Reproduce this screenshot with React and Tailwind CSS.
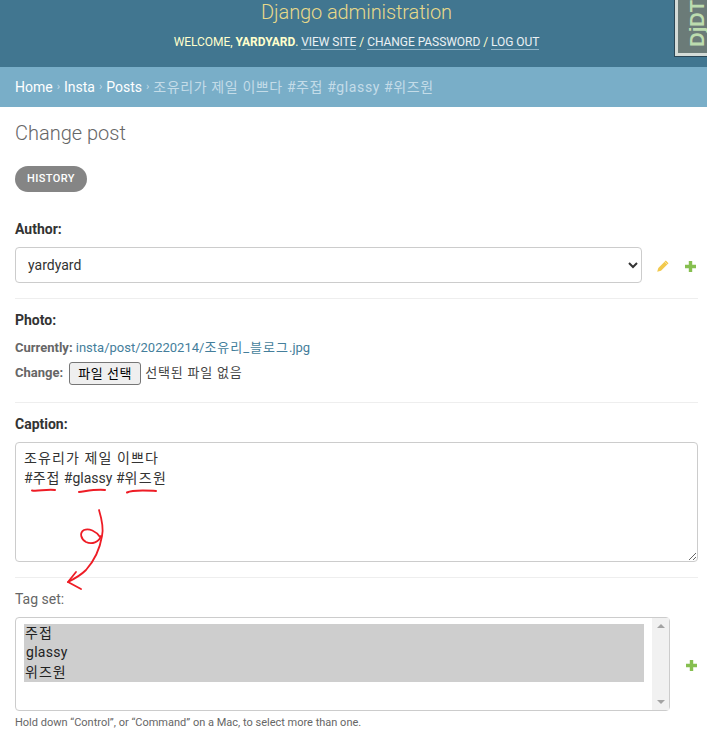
const font = { fontFamily: '"Roboto", "Noto Sans CJK KR", sans-serif' };

function Plus() {
  return (
    <svg width="13" height="13" viewBox="0 0 13 13" className="shrink-0">
      <path d="M4.800 1h3.400v3.800h3.800v3.400h-3.800v3.800h-3.400v-3.800h-3.800v-3.400h3.800z" fill="#86bf50" />
    </svg>
  );
}

function Pencil() {
  return (
    <svg width="14" height="14" viewBox="0 0 14 14" className="shrink-0">
      <path d="M9.800 1.500l2.700 2.700-7.500 7.500-3.800 1.100 1.100-3.800z" fill="#f2c94c" />
      <path d="M8.600 2.700l2.700 2.700" stroke="#fff" strokeWidth="0.500" />
    </svg>
  );
}

function Annotations() {
  return (
    <svg className="absolute left-0 top-0 pointer-events-none" width="707" height="742" viewBox="0 0 707 742" fill="none" stroke="#ee1c25" strokeLinecap="round" strokeLinejoin="round">
      <path d="M32 490.500C38 491.500 46 489 55 490" strokeWidth="2" />
      <path d="M79 492C87 491 96 489 105 490" strokeWidth="2" />
      <path d="M127 492.500C133 489.500 146 490.500 156 491" strokeWidth="2" />
      <path d="M99 510C102 520 104 528 102 536C100 548 94 561 86 570C80 576 74 579 68 582" strokeWidth="1.800" />
      <path d="M100 537C96 531 89 528 84 530C79 533 81 539 86 542C92 545 99 542 101 536" strokeWidth="1.800" />
      <path d="M76 572L68 582L81 589" strokeWidth="1.800" />
    </svg>
  );
}

function DjdtHandle() {
  return (
    <div className="absolute right-0 top-0 h-[56px] w-[32px] overflow-hidden bg-[#6b7b78] border-l-[3px] border-b-[3px] border-[#d5dcd8] outline outline-1 outline-[#2a4656]">
      <span className="absolute left-[9px] bottom-[6px] rotate-180 [writing-mode:vertical-rl] font-bold text-[20px] leading-[20px] text-[#bcdcae]" style={{ fontFamily: '"Liberation Sans", sans-serif' }}>DjDT</span>
    </div>
  );
}

function K({ children, t = "tracking-[0.8px]" }) {
  return <span className={t}>{children}</span>;
}

export default function App() {
  return (
    <div className="relative w-[707px] h-[742px] overflow-hidden bg-white text-[14px] text-[#333]" style={font}>
      <header className="relative h-[67px] bg-[#417690] pl-[6px] flex flex-col items-center">
        <h1 className="mt-[-1px] text-[20px] leading-[26px] font-light tracking-[-0.1px] text-[#e8d98a]">Django administration</h1>
        <div className="mt-[9px] text-[12px] leading-[16px] uppercase tracking-[-0.05px] text-[#ffc]">
          <span>Welcome, </span>
          <strong className="font-bold">yardyard</strong>
          <span>. </span>
          <a className="border-b border-[#8fb3c6] text-white/90">View site</a>
          <span> / </span>
          <a className="border-b border-[#8fb3c6] text-white/90">Change password</a>
          <span> / </span>
          <a className="border-b border-[#8fb3c6] text-white/90">Log out</a>
        </div>
        <DjdtHandle />
      </header>

      <nav className="h-[40px] bg-[#79aec8] px-[15px] flex items-center text-[14px] text-[#c4dce8]">
        <a className="text-white">Home</a>
        <span className="mx-[4px] text-[11px]">›</span>
        <a className="text-white">Insta</a>
        <span className="mx-[4px] text-[11px]">›</span>
        <a className="text-white">Posts</a>
        <span className="mx-[4px] text-[11px]">›</span>
        <span className="tracking-[0.6px]">조유리가 제일 이쁘다 #주접 #glassy #위즈원</span>
      </nav>

      <main className="pr-[9px] pl-[15px]">
        <h2 className="mt-[13px] text-[20px] leading-[26px] font-light text-[#666]">Change post</h2>

        <a className="mt-[20px] inline-flex h-[26px] w-[72px] items-center justify-center rounded-[13px] bg-[#858585] text-[11px] font-medium tracking-[0.4px] text-white uppercase">History</a>

        <section className="mt-[27px] pb-[15px] border-b border-[#eee]">
          <label className="block text-[14px] leading-[20px] font-bold text-[#333]">Author:</label>
          <div className="mt-[8px] flex items-center">
            <select className="w-[627px] h-[36px] rounded-[4px] border border-[#ccc] bg-white pl-[8px] text-[14px] text-[#333]" style={font} defaultValue="yardyard">
              <option>yardyard</option>
            </select>
            <span className="ml-[14px] mt-[2px] flex items-center gap-[14px]">
              <Pencil />
              <Plus />
            </span>
          </div>
        </section>

        <section className="pt-[11px] pb-[17px] border-b border-[#eee]">
          <label className="block text-[14px] leading-[20px] font-bold text-[#333]">Photo:</label>
          <div className="mt-[9px] text-[13px] leading-[18px] text-[#666]">
            <b className="font-bold">Currently:</b> <a className="text-[#447e9b]">insta/post/20220214/<K t="tracking-[1px]">조유리_블로그</K>.jpg</a>
          </div>
          <div className="mt-[5px] flex items-start text-[13px] leading-[18px] text-[#666]">
            <b className="font-bold mt-[2px]">Change:</b>
            <button className="ml-[6px] h-[23px] w-[72px] rounded-[3px] border border-[#767676] bg-[#efefef] text-[13px] tracking-[0.5px] text-black">파일 선택</button>
            <span className="ml-[4px] mt-[2px] tracking-[0.8px] text-[#444]">선택된 파일 없음</span>
          </div>
        </section>

        <section className="pt-[11px] pb-[15px] border-b border-[#eee]">
          <label className="block text-[14px] leading-[20px] font-bold text-[#333]">Caption:</label>
          <div className="mt-[8px] w-[683px] h-[120px] overflow-auto resize-y rounded-[4px] border border-[#ccc] px-[8px] py-[5px] text-[14px] leading-[20px] text-[#333]">
            <div className="tracking-[1.100px]">조유리가 제일 이쁘다</div>
            <div>#<K t="tracking-[1px]">주접</K> #glassy #<K t="tracking-[1.300px]">위즈원</K></div>
          </div>
        </section>

        <section className="pt-[11px]">
          <label className="block text-[14px] leading-[20px] text-[#666]">Tag set:</label>
          <div className="mt-[8px] flex items-center">
            <div className="relative w-[655px] h-[94px] rounded-[4px] border border-[#ccc] pl-[8px] pr-[25px] pt-[6px]">
              <div className="bg-[#cecece] pl-[1px] text-[14px] leading-[19.300px] text-[#222]">
                <div className="tracking-[1px]">주접</div>
                <div className="pl-[1px] tracking-[0.3px]">glassy</div>
                <div className="tracking-[1px]">위즈원</div>
              </div>
              <div className="absolute right-0 top-0 bottom-0 w-[17px] bg-[#f1f1f1] flex flex-col items-center justify-between py-[6px]">
                <span className="w-0 h-0 border-x-[4px] border-x-transparent border-b-[4px] border-b-[#a3a3a3]" />
                <span className="w-0 h-0 border-x-[4px] border-x-transparent border-t-[4px] border-t-[#a3a3a3]" />
              </div>
            </div>
            <span className="ml-[15px] mt-[2px]"><Plus /></span>
          </div>
          <p className="mt-[5px] text-[11px] leading-[14px] text-[#666]">Hold down “Control”, or “Command” on a Mac, to select more than one.</p>
        </section>
      </main>

      <Annotations />
    </div>
  );
}
